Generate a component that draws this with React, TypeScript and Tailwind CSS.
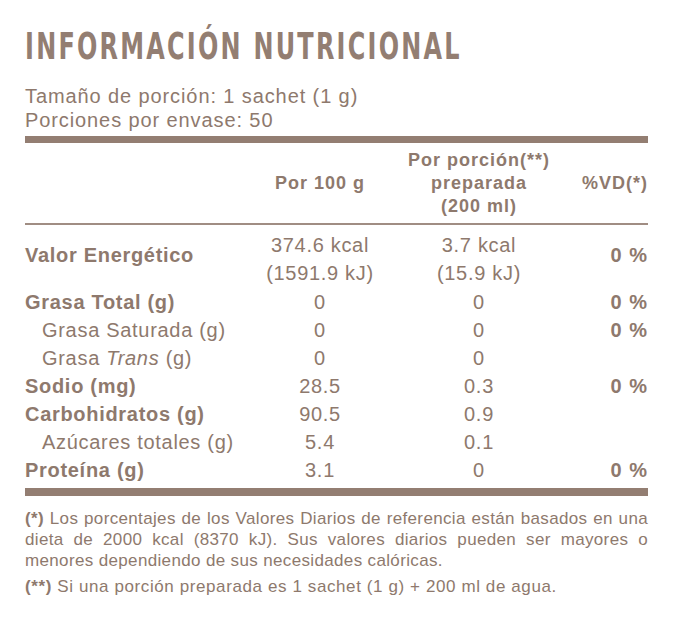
import React from 'react';

const sans = { fontFamily: '"Liberation Sans", Arial, sans-serif' };

type Row = {
  label: React.ReactNode;
  bold?: boolean;
  per100: React.ReactNode;
  perPortion: React.ReactNode;
  vd?: string;
};

const rows: Row[] = [
  { label: 'Grasa Total (g)', bold: true, per100: '0', perPortion: '0', vd: '0 %' },
  { label: 'Grasa Saturada (g)', per100: '0', perPortion: '0', vd: '0 %' },
  {
    label: (
      <>
        Grasa <i>Trans</i> (g)
      </>
    ),
    per100: '0',
    perPortion: '0',
  },
  { label: 'Sodio (mg)', bold: true, per100: '28.5', perPortion: '0.3', vd: '0 %' },
  { label: 'Carbohidratos (g)', bold: true, per100: '90.5', perPortion: '0.9' },
  { label: 'Azúcares totales (g)', per100: '5.4', perPortion: '0.1' },
  { label: 'Proteína (g)', bold: true, per100: '3.1', perPortion: '0', vd: '0 %' },
];

function NutritionRow({ row }: { row: Row }) {
  return (
    <div className="grid grid-cols-[225px_140px_178px_1fr] h-[28px] items-center text-[20px] tracking-[0.7px]">
      <div className={row.bold ? 'font-bold' : 'pl-[17px]'}>{row.label}</div>
      <div className="text-center">{row.per100}</div>
      <div className="text-center">{row.perPortion}</div>
      <div className="text-right font-bold tracking-[1px]">{row.vd}</div>
    </div>
  );
}

export default function App() {
  return (
    <div className="min-h-[619px] w-[677px] bg-white pl-[25px] pr-[29px] pt-[24px] text-[#8e796d]" style={sans}>
      <h1
        className="inline-block origin-left scale-x-[0.7] whitespace-nowrap text-[38px] leading-[44px] font-bold tracking-[3.2px] text-[#937e72]"
        style={{ fontFamily: '"DejaVu Sans Condensed", "DejaVu Sans", sans-serif' }}
      >
        INFORMACIÓN NUTRICIONAL
      </h1>

      <div className="mt-[16px] text-[20px] leading-[24px] tracking-[0.9px]">
        <p>Tamaño de porción: 1 sachet (1 g)</p>
        <p>Porciones por envase: 50</p>
      </div>

      <div className="mt-[4px] h-[7px] bg-[#937e72]" />

      {/* header */}
      <div className="grid grid-cols-[225px_140px_178px_1fr] items-center pt-[6px] pb-[5px] text-[18px] leading-[23px] font-bold tracking-[1px]">
        <div />
        <div className="text-center">Por 100 g</div>
        <div className="text-center">
          Por porción(**)
          <br />
          preparada
          <br />
          (200 ml)
        </div>
        <div className="text-right">%VD(*)</div>
      </div>

      <div className="h-[2px] bg-[#a08d83]" />

      <div className="pt-[6px] pb-[5px]">
        <div className="grid grid-cols-[225px_140px_178px_1fr] items-center text-[20px] leading-[28px] tracking-[0.7px]">
          <div className="mb-[8px] font-bold">Valor Energético</div>
          <div className="text-center">
            374.6 kcal
            <br />
            (1591.9 kJ)
          </div>
          <div className="text-center">
            3.7 kcal
            <br />
            (15.9 kJ)
          </div>
          <div className="mb-[8px] text-right font-bold tracking-[1px]">0 %</div>
        </div>
        {rows.map((row, i) => (
          <NutritionRow key={i} row={row} />
        ))}
      </div>

      <div className="h-[8px] bg-[#937e72]" />

      <div className="mt-[12px] text-[17px] leading-[21px] tracking-[0.35px]">
        <p className="text-justify">
          <b>(*)</b> Los porcentajes de los Valores Diarios de referencia están basados en una dieta de 2000 kcal
          (8370 kJ). Sus valores diarios pueden ser mayores o menores dependiendo de sus necesidades calóricas.
        </p>
        <p className="mt-[5px] tracking-[0.6px]">
          <b>(**)</b> Si una porción preparada es 1 sachet (1 g) + 200 ml de agua.
        </p>
      </div>
    </div>
  );
}
